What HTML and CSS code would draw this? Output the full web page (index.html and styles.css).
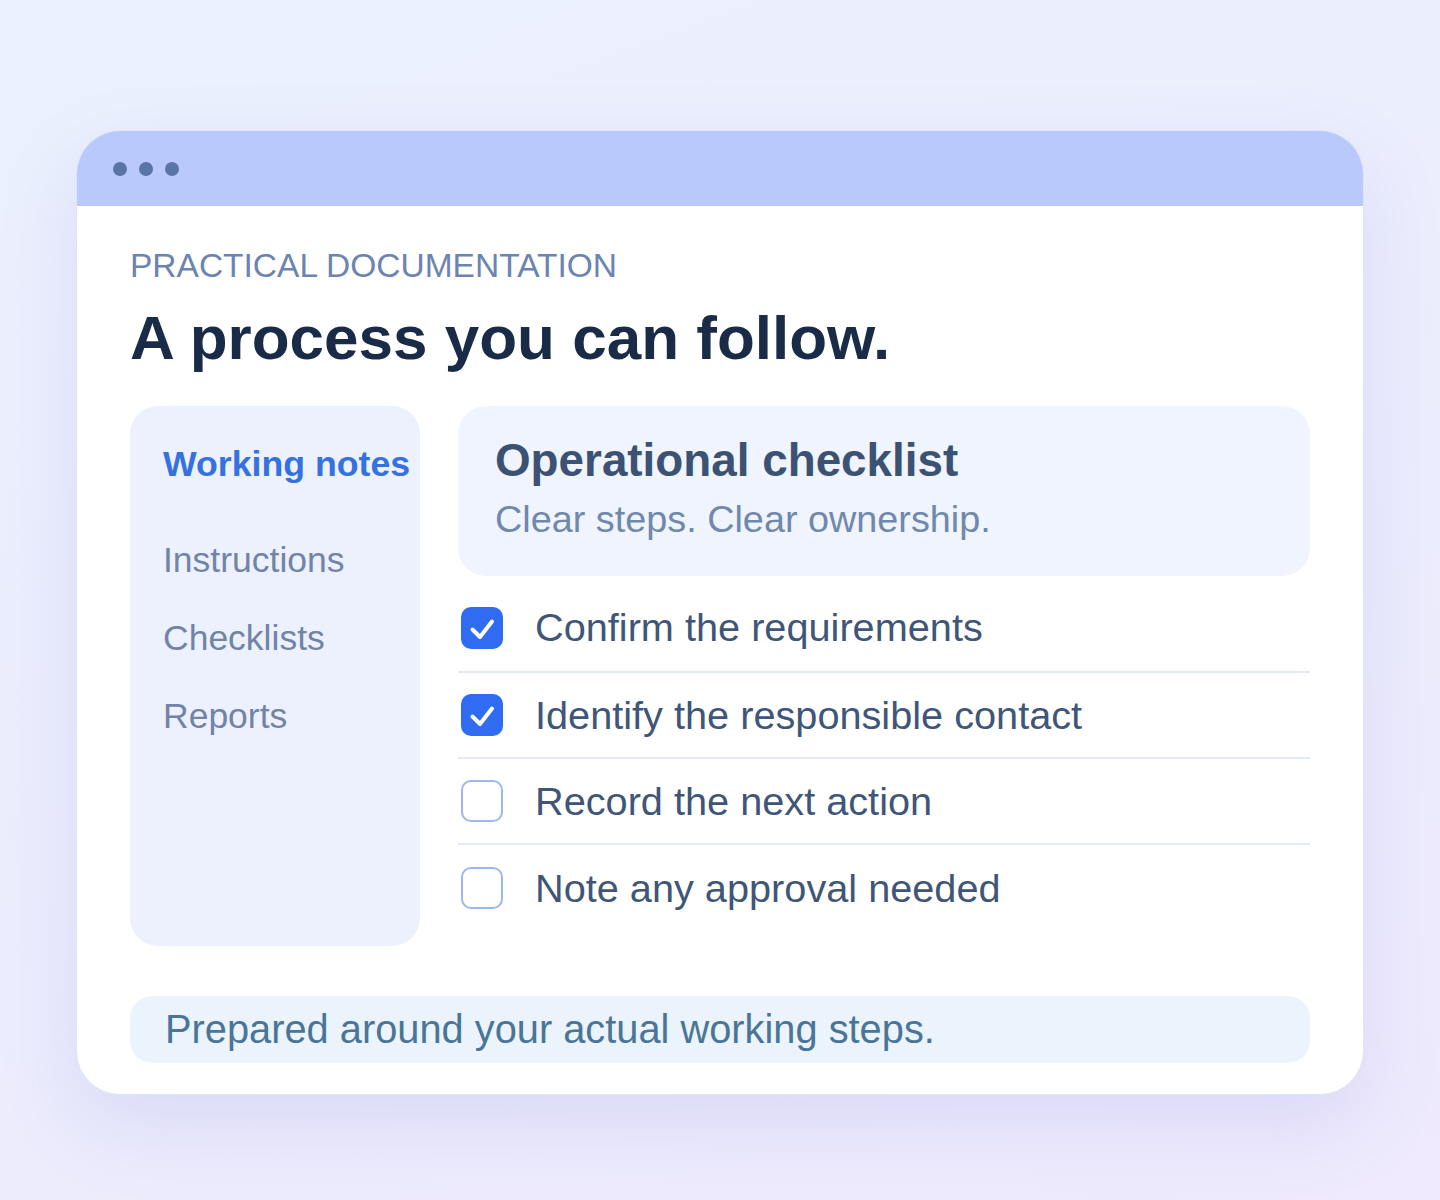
FILE: index.html
```html
<!DOCTYPE html>
<html lang="en">
<head>
    <meta charset="UTF-8">
    <title>A process you can follow</title>
    <link rel="stylesheet" href="styles.css">
</head>
<body>
<div class="window">
    <div class="titlebar">
        <span class="dot"></span>
        <span class="dot"></span>
        <span class="dot"></span>
    </div>
    <div class="content">
        <div class="eyebrow">PRACTICAL DOCUMENTATION</div>
        <h1 class="title">A process you can follow.</h1>

        <div class="columns">
            <div class="sidebar">
                <div class="side-active">Working notes</div>
                <div class="side-item">Instructions</div>
                <div class="side-item">Checklists</div>
                <div class="side-item">Reports</div>
            </div>

            <div class="main">
                <div class="panel-head">
                    <div class="panel-title">Operational checklist</div>
                    <div class="panel-sub">Clear steps. Clear ownership.</div>
                </div>
                <div class="row first">
                    <span class="box checked">
                        <svg width="42" height="42" viewBox="0 0 42 42"><path d="M11.5 22.5l7.5 7.5L31 14.5" fill="none" stroke="#fff" stroke-width="4" stroke-linecap="round" stroke-linejoin="round"/></svg>
                    </span>
                    <span class="row-text">Confirm the requirements</span>
                </div>
                <div class="row">
                    <span class="box checked">
                        <svg width="42" height="42" viewBox="0 0 42 42"><path d="M11.5 22.5l7.5 7.5L31 14.5" fill="none" stroke="#fff" stroke-width="4" stroke-linecap="round" stroke-linejoin="round"/></svg>
                    </span>
                    <span class="row-text">Identify the responsible contact</span>
                </div>
                <div class="row">
                    <span class="box"></span>
                    <span class="row-text">Record the next action</span>
                </div>
                <div class="row last">
                    <span class="box"></span>
                    <span class="row-text">Note any approval needed</span>
                </div>
            </div>
        </div>

        <div class="footnote">Prepared around your actual working steps.</div>
    </div>
</div>
</body>
</html>
```

FILE: styles.css
```css
*{
    margin: 0;
    padding: 0;
    box-sizing: border-box;
}
html,body{
    height: 100%;
}
body{
    font-family: "Liberation Sans", Arial, sans-serif;
    background: linear-gradient(160deg, #ebf1fe 0%, #ecedfd 60%, #efeafd 100%);
    padding: 130px 76px 0 76px;
}
.window{
    width: 1288px;
    height: 965px;
    background-color: #fff;
    border: 1px solid #dde5fb;
    border-radius: 44px;
    overflow: hidden;
    box-shadow: 0 30px 80px rgba(120, 120, 220, 0.16);
}
.titlebar{
    display: flex;
    align-items: center;
    gap: 12px;
    height: 75px;
    padding-left: 36px;
    background-color: #b9c9fc;
}
.dot{
    width: 14px;
    height: 14px;
    border-radius: 50%;
    background-color: #5b74a8;
}
.content{
    padding: 38px 53px 0 53px;
}
.eyebrow{
    font-size: 33.5px;
    line-height: 44px;
    color: #6c84b0;
}
.title{
    margin-top: 12px;
    font-size: 62px;
    line-height: 76px;
    font-weight: bold;
    color: #1a2b48;
}
.columns{
    display: flex;
    gap: 38px;
    margin-top: 30px;
}
.sidebar{
    width: 290px;
    flex-shrink: 0;
    height: 540px;
    padding: 36px 0 0 33px;
    background-color: #edf1fd;
    border-radius: 28px;
}
.side-active{
    font-size: 35.7px;
    line-height: 44px;
    font-weight: bold;
    color: #3572e0;
    margin-bottom: 52px;
}
.side-item{
    font-size: 35.5px;
    line-height: 44px;
    color: #7184a8;
    margin-bottom: 34px;
}
.main{
    flex: 1;
}
.panel-head{
    height: 170px;
    padding: 28px 37px 0 37px;
    background-color: #eff4fe;
    border-radius: 28px;
}
.panel-title{
    font-size: 45.8px;
    line-height: 54px;
    font-weight: bold;
    color: #3b5273;
}
.panel-sub{
    margin-top: 6px;
    font-size: 37.8px;
    line-height: 50px;
    color: #7088ab;
}
.row{
    display: flex;
    align-items: center;
    gap: 32px;
    height: 86px;
    padding-left: 3px;
    border-bottom: 2px solid #e3e9f7;
}
.row.first{
    height: 97px;
    padding-top: 8px;
}
.row.last{
    border-bottom: none;
}
.box{
    display: flex;
    align-items: center;
    justify-content: center;
    flex-shrink: 0;
    width: 42px;
    height: 42px;
    border: 2px solid #9db8f0;
    border-radius: 10px;
    background-color: #fff;
}
.box.checked{
    border: none;
    background-color: #2f6cf2;
}
.row-text{
    font-size: 39.7px;
    color: #3f5679;
}
.footnote{
    margin-top: 50px;
    height: 67px;
    padding-left: 35px;
    font-size: 39.8px;
    line-height: 66px;
    color: #4a7597;
    background-color: #ebf4fc;
    border-radius: 22px;
}
```
